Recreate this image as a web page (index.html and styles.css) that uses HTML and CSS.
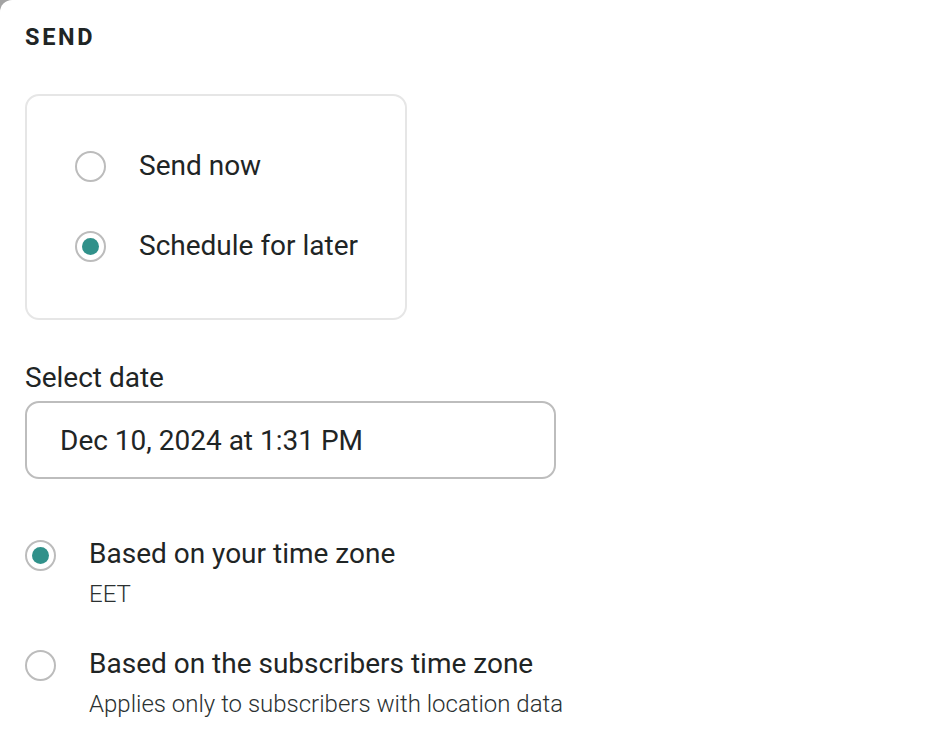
FILE: index.html
```html
<!DOCTYPE html>
<html lang="en">
<head>
<meta charset="utf-8">
<title>Send</title>
<link rel="stylesheet" href="styles.css">
</head>
<body>
<main class="page">
  <h2 class="title">SEND</h2>

  <div class="choice-card">
    <label class="option">
      <span class="radio"></span>
      <span class="option-text">Send now</span>
    </label>
    <label class="option">
      <span class="radio checked"></span>
      <span class="option-text">Schedule for later</span>
    </label>
  </div>

  <div class="field-label">Select date</div>
  <div class="date-input">Dec 10, 2024 at 1:31 PM</div>

  <div class="tz-list">
    <div class="tz-option">
      <span class="radio checked"></span>
      <div class="tz-text">
        <div class="tz-title">Based on your time zone</div>
        <div class="tz-sub">EET</div>
      </div>
    </div>
    <div class="tz-option">
      <span class="radio"></span>
      <div class="tz-text">
        <div class="tz-title">Based on the subscribers time zone</div>
        <div class="tz-sub">Applies only to subscribers with location data</div>
      </div>
    </div>
  </div>
</main>
</body>
</html>
```

FILE: styles.css
```css
* { box-sizing: border-box; }

html, body {
  margin: 0;
  padding: 0;
  background: #a3a3a3;
}

.page {
  background: #ffffff;
  min-height: 100vh;
  border-top-left-radius: 12px;
  padding: 24px 0 0 25px;
  font-family: Roboto, "Liberation Sans", sans-serif;
  color: #1f2525;
}

.title {
  margin: 0;
  font-size: 23.5px;
  line-height: 26px;
  font-weight: 700;
  letter-spacing: 2.7px;
  color: #1f2525;
}

.choice-card {
  margin-top: 44px;
  width: 382px;
  border: 2px solid #e6e6e6;
  border-radius: 14px;
  padding: 50px 0 52px 48px;
  display: flex;
  flex-direction: column;
  gap: 40px;
}

.option {
  display: flex;
  align-items: center;
  height: 40px;
  gap: 33px;
}

.option-text {
  font-size: 28px;
  line-height: 40px;
}

.radio {
  flex: none;
  width: 31px;
  height: 31px;
  border: 2px solid #bcbcbc;
  border-radius: 50%;
  display: flex;
  align-items: center;
  justify-content: center;
  background: #fff;
}

.radio.checked::after {
  content: "";
  width: 17px;
  height: 17px;
  border-radius: 50%;
  background: #30918a;
}

.field-label {
  margin-top: 41px;
  font-size: 28px;
  line-height: 34px;
}

.date-input {
  margin-top: 6px;
  width: 531px;
  height: 78px;
  border: 2px solid #bdbdbd;
  border-radius: 14px;
  padding-left: 33px;
  display: flex;
  align-items: center;
  font-size: 28px;
}

.tz-list {
  margin-top: 57px;
  display: flex;
  flex-direction: column;
  gap: 38px;
}

.tz-option {
  display: flex;
  align-items: flex-start;
  gap: 33px;
}

.tz-option .radio {
  margin-top: 4px;
}

.tz-title {
  font-size: 28px;
  line-height: 40px;
  margin-top: -2px;
}

.tz-sub {
  font-size: 24px;
  line-height: 28px;
  font-weight: 300;
  color: #2b3131;
  margin-top: 6px;
}
```
